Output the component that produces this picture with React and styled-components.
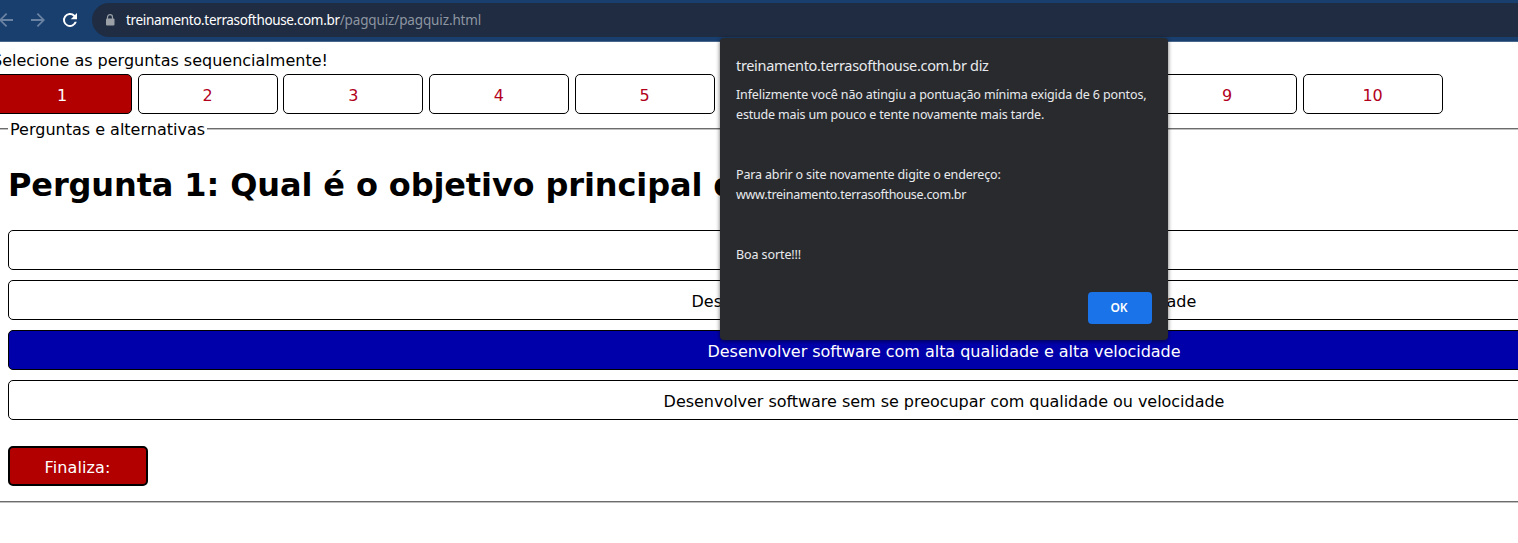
import React from "react";
import styled, { createGlobalStyle } from "styled-components";

const GlobalStyle = createGlobalStyle`
  * { box-sizing: border-box; }
  body {
    margin: 0;
    overflow: hidden;
    background: #fff;
    color: #000;
    font: 16px/20px "DejaVu Sans", sans-serif;
  }
`;

const Browser = styled.div`
  height: 543px;
  overflow: hidden;
`;

const Toolbar = styled.div`
  display: flex;
  height: 42px;
  padding-top: 3px;
  background: #193f6e;
  border-bottom: 1px solid #48658b;
`;

const Controls = styled.div`
  display: flex;
  flex: none;
  width: 92px;
  height: 34px;
`;

const ToolIcon = styled.svg`
  flex: none;
  width: 32px;
  height: 34px;
  margin-left: ${(p) => p.$offset || 0}px;
  fill: ${(p) => p.$color};
`;

const AddressBar = styled.div`
  display: flex;
  flex: 1;
  align-items: center;
  height: 34px;
  padding-left: 13px;
  border-radius: 17px 0 0 17px;
  background: #1f2c42;
  color: #8e96a1;
  font: 13.5px/20px "Noto Sans", sans-serif;
  white-space: nowrap;
`;

const LockIcon = styled.svg`
  width: 10px;
  height: 12px;
  margin-right: 11px;
`;

const Host = styled.span`
  color: #fff;
  letter-spacing: -0.34px;
`;

const Path = styled.span`
  letter-spacing: -0.13px;
`;

const Page = styled.main`
  width: 1904px;
  margin-left: -8px;
  padding-top: 9px;
`;

const Intro = styled.div`
  height: 23px;
  white-space: nowrap;
`;

const QuestionNav = styled.nav`
  display: flex;
  gap: 5.63px;
`;

const Button = styled.button`
  width: 140px;
  height: 40px;
  padding: 3px 0 0;
  border: ${(p) => p.$border || 1}px solid #000;
  border-radius: 5px;
  background: ${(p) => (p.$filled ? "#b20000" : "#fff")};
  color: ${(p) => (p.$filled ? "#fff" : "#b2001c")};
  font: inherit;
`;

const FinishButton = styled(Button)`
  padding-right: 1px;
  letter-spacing: 0.12px;
`;

const QuestionSet = styled.fieldset`
  height: 384px;
  margin: 5px 0 0;
  padding: 0 14px;
  border: 2px groove #c0c0c0;
`;

const Legend = styled.legend`
  height: 20px;
  padding: 1px 2px 0;
  white-space: nowrap;
`;

const Question = styled.h1`
  margin: 26px 0 25px;
  font-size: 32px;
  line-height: 40px;
  white-space: nowrap;
`;

const Answers = styled.div`
  display: flex;
  flex-direction: column;
  gap: 10px;
  margin-bottom: 26px;
`;

const Answer = styled(Button)`
  width: 100%;
  background: ${(p) => (p.$selected ? "#0000aa" : "#fff")};
  color: ${(p) => (p.$selected ? "#fff" : "#000")};
  letter-spacing: ${(p) => p.$spacing || -0.03}px;
`;

const Dialog = styled.section`
  position: absolute;
  top: 38px;
  left: 720px;
  display: flex;
  flex-direction: column;
  width: 448px;
  height: 302px;
  padding: 16px 16px 16px;
  border-radius: 4px;
  background: #292a2d;
  color: #e8eaed;
  box-shadow: 0 1px 4px rgba(0, 0, 0, 0.6);
  font: 12.5px/20px "Noto Sans", sans-serif;
  white-space: nowrap;
`;

const DialogTitle = styled.div`
  height: 31px;
  font-size: 14.5px;
  line-height: 22px;
`;

const Message = styled.p`
  margin: 0 0 ${(p) => (p.$last ? 0 : 40)}px;
`;

const Line = styled.span`
  display: block;
  width: max-content;
  letter-spacing: ${(p) => p.$spacing || 0}px;
`;

const OkButton = styled.button`
  align-self: flex-end;
  width: 64px;
  height: 32px;
  margin-top: auto;
  padding: 0 2px 2px 0;
  border: 0;
  border-radius: 4px;
  background: #1a73e8;
  color: #fff;
  font: 600 12px "Noto Sans", sans-serif;
`;

const questions = [1, 2, 3, 4, 5, 6, 7, 8, 9, 10];

export default function App() {
  return (
    <Browser>
      <GlobalStyle />
      <Toolbar>
        <Controls>
          <ToolIcon $color="#6b83a3" $offset={-10} viewBox="0 0 32 34">
            <path d="M23 16.1H12.4l4.9-4.9L16 10l-7 7 7 7 1.2-1.2-4.9-4.9H23z" />
          </ToolIcon>
          <ToolIcon $color="#6b83a3" viewBox="0 0 32 34">
            <path d="M9 16.1h10.6l-4.9-4.9L16 10l7 7-7 7-1.2-1.2 4.9-4.9H9z" />
          </ToolIcon>
          <ToolIcon $color="#fff" viewBox="0 0 32 34">
            <path d="M20.95 12.05A7 7 0 1 0 22.77 18.75h-2.1A5 5 0 1 1 19.5 13.5L16.75 16.25H23V10z" />
          </ToolIcon>
        </Controls>
        <AddressBar>
          <LockIcon viewBox="0 0 10 12">
            <path d="M2.5 5V3.2a2.5 2.5 0 0 1 5 0V5" fill="none" stroke="#9aa0a6" strokeWidth="1.2" />
            <rect x="1" y="4.5" width="8.5" height="7" rx="1" fill="#9aa0a6" />
          </LockIcon>
          <Host>treinamento.terrasofthouse.com.br</Host>
          <Path>/pagquiz/pagquiz.html</Path>
        </AddressBar>
      </Toolbar>
      <Page>
        <Intro><Line>Selecione as perguntas sequencialmente!</Line></Intro>
        <QuestionNav>
          {questions.map((n) => (
            <Button key={n} $filled={n === 1}>{n}</Button>
          ))}
        </QuestionNav>
        <QuestionSet>
          <Legend><Line>Perguntas e alternativas</Line></Legend>
          <Question><Line $spacing={-0.12}>Pergunta 1: Qual é o objetivo principal do</Line></Question>
          <Answers>
            <Answer />
            <Answer $spacing={0.06}>Desenvolver software com baixa qualidade e baixa velocidade</Answer>
            <Answer $selected>Desenvolver software com alta qualidade e alta velocidade</Answer>
            <Answer>Desenvolver software sem se preocupar com qualidade ou velocidade</Answer>
          </Answers>
          <FinishButton $filled $border={2}>Finaliza:</FinishButton>
        </QuestionSet>
      </Page>
      <Dialog role="alertdialog">
        <DialogTitle><Line $spacing={-0.33}>treinamento.terrasofthouse.com.br diz</Line></DialogTitle>
        <Message>
          <Line $spacing={-0.13}>Infelizmente você não atingiu a pontuação mínima exigida de 6 pontos,</Line>
          <Line $spacing={-0.17}>estude mais um pouco e tente novamente mais tarde.</Line>
        </Message>
        <Message>
          <Line $spacing={-0.15}>Para abrir o site novamente digite o endereço:</Line>
          <Line $spacing={-0.28}>www.treinamento.terrasofthouse.com.br</Line>
        </Message>
        <Message $last><Line $spacing={-0.1}>Boa sorte!!!</Line></Message>
        <OkButton>OK</OkButton>
      </Dialog>
    </Browser>
  );
}
